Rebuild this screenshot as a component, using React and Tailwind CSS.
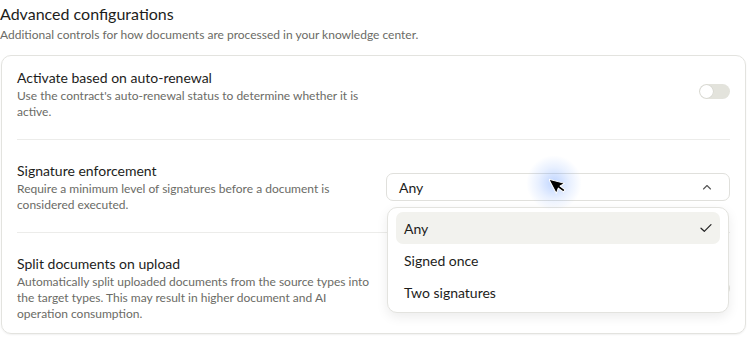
import React from "react";

function Toggle() {
  return (
    <div className="w-[31px] h-[15px] rounded-full bg-[#e3e3dc] flex items-center px-[1px]">
      <div className="w-[13px] h-[13px] rounded-full bg-white shadow-[0_0_0_0.5px_rgba(0,0,0,0.08)]" />
    </div>
  );
}

function Cursor() {
  return (
    <div className="absolute left-[526px] top-[155px] w-[56px] h-[56px] pointer-events-none">
      <div className="absolute inset-0 rounded-full bg-[radial-gradient(circle,rgba(96,150,255,0.4)_0%,rgba(96,150,255,0.14)_40%,rgba(96,150,255,0)_70%)]" />
      <svg className="absolute left-[23px] top-[19px]" width="20" height="22" viewBox="0 0 20 22">
        <g transform="rotate(-28 8 10)">
          <path d="M3 2 L3 18 L7.2 14.2 L10 20 L12.4 19 L9.8 13.2 L15 13 Z" fill="#000" stroke="#fff" strokeWidth="1" strokeLinejoin="round" />
        </g>
      </svg>
    </div>
  );
}

export default function App() {
  return (
    <div className="relative w-[747px] h-[340px] bg-white font-['Lato',sans-serif] text-[#1d1d1b] overflow-hidden">
      <div className="pt-[2px]">
        <h2 className="text-[16px] leading-6">Advanced configurations</h2>
        <p className="text-[12px] leading-4 text-[#6b6b66] mt-[1px]">
          Additional controls for how documents are processed in your knowledge center.
        </p>
      </div>
      <div className="mt-[12px] mx-[1px] rounded-[10px] border border-[#e3e3df] shadow-[0_1px_2px_rgba(0,0,0,0.06)] px-[15px] pt-[12px] pb-[11px]">
        <div className="grid grid-cols-[1fr_344px] gap-x-[8px] items-center">
          <div>
            <div className="text-[14px] leading-5">Activate based on auto-renewal</div>
            <div className="text-[12px] leading-4 text-[#6b6b66] max-w-[350px]">
              Use the contract's auto-renewal status to determine whether it is active.
            </div>
          </div>
          <div className="flex justify-end -mt-[5px]">
            <Toggle />
          </div>
        </div>
        <div className="h-px bg-[#ececea] mt-[19px] mb-[21px]" />
        <div className="grid grid-cols-[1fr_344px] gap-x-[8px] items-center">
          <div>
            <div className="text-[14px] leading-5">Signature enforcement</div>
            <div className="text-[12px] leading-4 text-[#6b6b66] max-w-[350px]">
              Require a minimum level of signatures before a document is considered executed.
            </div>
          </div>
          <div className="relative">
            <div className="h-[28px] rounded-[7px] border border-[#e0e0dc] flex items-center justify-between pl-3 pr-[17px] text-[14px]">
              <span>Any</span>
              <svg width="10" height="6" viewBox="0 0 10 6" fill="none">
                <path d="M1.5 5 L5 1.5 L8.5 5" stroke="#555" strokeWidth="1.1" strokeLinecap="round" strokeLinejoin="round" />
              </svg>
            </div>
          </div>
        </div>
        <div className="h-px bg-[#ececea] mt-[19px] mb-[21px]" />
        <div className="grid grid-cols-[1fr_344px] gap-x-[8px] items-center">
          <div>
            <div className="text-[14px] leading-5">Split documents on upload</div>
            <div className="text-[12px] leading-4 text-[#6b6b66]">
              Automatically split uploaded documents from the source types into the target types. This may result in higher document and AI operation consumption.
            </div>
          </div>
          <div className="flex justify-end">
            <Toggle />
          </div>
        </div>
      </div>

      <div className="absolute left-[387px] top-[207px] w-[342px] rounded-[10px] border border-[#e3e3df] bg-white shadow-[0_4px_12px_rgba(0,0,0,0.08)] py-[4px] px-[8px] text-[14px]">
        <div className="h-8 rounded-[7px] bg-[#f2f2ee] flex items-center justify-between pl-2 pr-[8px]">
          <span>Any</span>
          <svg width="12" height="10" viewBox="0 0 12 10" fill="none">
            <path d="M1 5.2 L4.3 8.3 L11 1.6" stroke="#222" strokeWidth="1.2" strokeLinecap="round" strokeLinejoin="round" />
          </svg>
        </div>
        <div className="h-8 flex items-center pl-2">Signed once</div>
        <div className="h-8 flex items-center pl-2">Two signatures</div>
      </div>

      <Cursor />
    </div>
  );
}
